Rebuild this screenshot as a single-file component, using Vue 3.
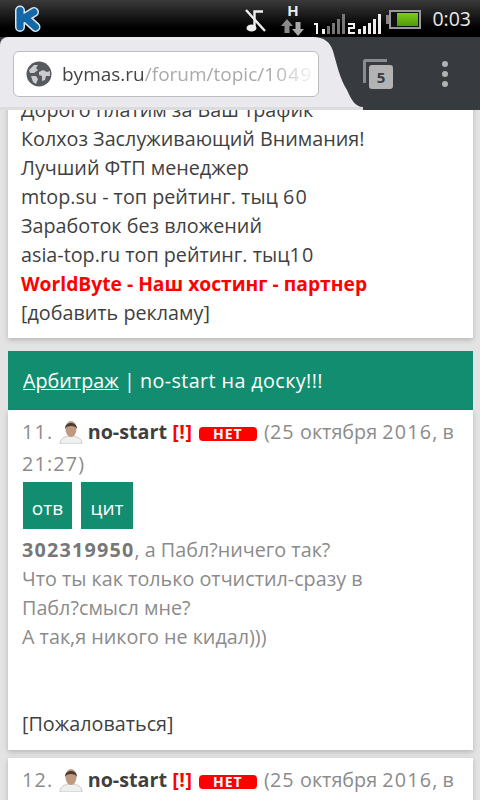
<template>
  <div class="phone">
    <header class="status">
      <svg class="klogo" width="30" height="30" viewBox="0 0 30 30">
        <g fill="none" stroke-linecap="round" stroke-linejoin="round">
          <path d="M6 7.500V24M6 17.500L20 9M11 14.500L21.500 24" stroke="#d9e6ee" stroke-width="10"/>
          <path d="M6 7.500V24M6 17.500L20 9M11 14.500L21.500 24" stroke="#1468a8" stroke-width="7"/>
        </g>
      </svg>
      <div class="spacer"></div>
      <svg class="mute" width="22" height="26" viewBox="0 0 22 26">
        <path d="M9.500 19V3.500H18" fill="none" stroke="#eee" stroke-width="2.400"/>
        <ellipse cx="6.500" cy="20" rx="5" ry="3.600" fill="#eee"/>
        <path d="M1 2L20 23" stroke="#eee" stroke-width="2.400"/>
      </svg>
      <div class="net">
        <span class="h">H</span>
        <svg width="23" height="17" viewBox="0 0 23 17"><path d="M6 0L12 7H8.500V14H3.500V7H0Z" fill="#8a8a8a"/><path d="M17 17L11 10H14.500V3H19.500V10H23Z" fill="#a8a8a8"/></svg>
      </div>
      <div class="signals">
        <svg width="68" height="24" viewBox="0 0 68 24">
          <g fill="#f2f2f2"><path d="M1 12H5V23H3V14H1ZM9 18H12V23H9Z"/></g>
          <g fill="#777"><rect x="14" y="15" width="3" height="8"/><rect x="19" y="12" width="3" height="11"/><rect x="24" y="8" width="3" height="15"/><rect x="29" y="3" width="3" height="20"/></g>
          <path d="M35 12H42V18H37V21H42V23H35V16H40V14H35Z" fill="#f2f2f2"/>
          <g fill="#eee"><rect x="45" y="18" width="3" height="5"/><rect x="50" y="15" width="3" height="8"/><rect x="55" y="12" width="3" height="11"/><rect x="60" y="8" width="3" height="15"/><rect x="65" y="3" width="3" height="20"/></g>
        </svg>
      </div>
      <div class="battery"><i class="cap"></i><i class="cell"><b></b></i></div>
      <span class="time">0:03</span>
    </header>

    <div class="toolbar">
      <div class="tab">
        <svg class="curve" width="50" height="73" viewBox="0 0 50 73"><path d="M0 0C11 0 17 5 20 14C24 28 27 42 34 53C38 62 42 70 50 70H0Z" fill="#e9e9ee"/><rect y="70" width="50" height="3" fill="#dcdcde"/></svg>
        <div class="omnibox">
          <svg class="globe" width="26" height="26" viewBox="0 0 26 26">
            <circle cx="13" cy="13" r="12.500" fill="#565a5e"/>
            <path d="M3 9L8 4L12 4L10 7L12 9L8 12L4 12ZM13 11L17 9L21 11L24 10L24 15L20 15L19 19L16 20L16 15L13 14ZM5 15L10 15L12 18L10 23L7 21Z" fill="#c9cbcd"/>
          </svg>
          <span class="url"><span class="dom">bymas.ru</span><span class="path">/forum/topic/<span class="d">10498</span></span></span>
        </div>
      </div>
      <div class="tools">
        <div class="tabs-btn">
          <span class="back-tab"></span>
          <span class="count">5</span>
        </div>
        <div class="menu"><i></i><i></i><i></i></div>
      </div>
    </div>

    <main class="page">
      <div class="flow">
        <section class="card ads">
          <div>Дорого платим за Ваш трафик</div>
          <div>Колхоз Заслуживающий Внимания!</div>
          <div>Лучший ФТП менеджер</div>
          <div>mtop.su - топ рейтинг. тыц <span class="d">60</span></div>
          <div>Заработок без вложений</div>
          <div>asia-top.ru топ рейтинг. тыц<span class="d">10</span></div>
          <div class="hot">WorldByte - Наш хостинг - партнер</div>
          <div>[добавить рекламу]</div>
        </section>

        <section class="title"><u>Арбитраж</u> | <span class="wide">no-start на доску!!!</span></section>

        <section class="card post">
          <div class="meta">
            <span class="d">11.</span>&nbsp;<svg class="ava" width="24" height="24" viewBox="0 0 24 24"><path d="M1 24C1 18 6 17 9 16H15C18 17 23 18 23 24Z" fill="#eef0f0" stroke="#bbb" stroke-width=".8"/><ellipse cx="12" cy="9" rx="5.500" ry="8" fill="#c09a80"/><path d="M6 9C5.500 1 18.500 1 18 9C17 5 7 5 6 9Z" fill="#4a3b35"/></svg>&nbsp;<b>no-start</b> <span class="warn">[!]</span> <span class="no">НЕТ</span> (<span class="d">25</span> октября <span class="d">2016</span>, в <span class="d">21:27</span>)
          </div>
          <div class="btns"><span class="reply">отв</span><span class="quote">цит</span></div>
          <div class="body">
            <b><span class="d">302319950</span></b>, а Пабл?ничего так?<br>Что ты как только отчистил-сразу в<br>Пабл?смысл мне?<br>А так,я никого не кидал)))
          </div>
          <div class="report">[Пожаловаться]</div>
        </section>

        <section class="card post next">
          <div class="meta">
            <span class="d">12.</span>&nbsp;<svg class="ava" width="24" height="24" viewBox="0 0 24 24"><path d="M1 24C1 18 6 17 9 16H15C18 17 23 18 23 24Z" fill="#eef0f0" stroke="#bbb" stroke-width=".8"/><ellipse cx="12" cy="9" rx="5.500" ry="8" fill="#c09a80"/><path d="M6 9C5.500 1 18.500 1 18 9C17 5 7 5 6 9Z" fill="#4a3b35"/></svg>&nbsp;<b>no-start</b> <span class="warn">[!]</span> <span class="no">НЕТ</span> (<span class="d">25</span> октября <span class="d">2016</span>, в <span class="d">21:27</span>)
          </div>
        </section>
      </div>
    </main>
  </div>
</template>

<script setup>
</script>

<style>
html, body { margin: 0; background: #e3e3e3; }
</style>

<style scoped>
.phone {
  width: 480px; height: 800px; overflow: hidden;
  display: flex; flex-direction: column;
  font-family: "Open Sans", "Noto Sans", sans-serif;
}
.d { letter-spacing: 1.2px; }
.status {
  height: 37px; flex: none; display: flex; align-items: center;
  background: linear-gradient(#3a3a3a, #000 75%);
  box-sizing: border-box; padding: 0 9px 0 14px;
}
.klogo { margin-top: -1px; }
.spacer { flex: 1; }
.mute { margin-top: 4px; margin-right: 14px; }
.net { width: 23px; display: flex; flex-direction: column; align-items: center; margin-right: 9px; margin-top: 4px; }
.h { color: #eee; font: bold 15px/12px "Liberation Sans", sans-serif; margin-bottom: 2px; }
.net svg { display: block; }
.signals { height: 24px; margin-top: 9px; margin-right: 5px; }
.signals svg { display: block; }
.battery { display: flex; align-items: center; margin-right: 11px; margin-top: 2px; }
.cap { width: 3px; height: 9px; background: #888; }
.cell { width: 26px; height: 13px; border: 2px solid #999; padding: 1px; background: #111; display: block; }
.cell b { display: block; height: 100%; background: linear-gradient(#7fcc1c, #4f9a08); margin-left: 5px; }
.time { color: #e8e8e8; font: 19.500px/1 "Open Sans", sans-serif; }

.toolbar {
  height: 73px; flex: none; display: flex; background: #373b40;
}
.tab {
  width: 313px; flex: none; position: relative; background: #e9e9ee;
  box-sizing: border-box; padding: 14px 0 0 13px;
  border-top-left-radius: 8px;
  border-bottom: 3px solid #dcdcde;
}
.curve { position: absolute; left: 313px; top: 0; display: block; }
.omnibox {
  position: relative;
  width: 306px; height: 46px; box-sizing: border-box;
  background: #fff; border: 1px solid #bdbdbd; border-radius: 6px;
  display: flex; align-items: center; padding-left: 12px; gap: 10px; overflow: hidden;
}
.globe { flex: none; }
.url { font-size: 19px; white-space: nowrap; -webkit-mask-image: linear-gradient(90deg,#000 80%,transparent 97%); mask-image: linear-gradient(90deg,#000 80%,transparent 97%); }
.dom { color: #444; }
.path { color: #aaa; }
.tools {
  flex: 1; display: flex; align-items: center; padding: 0 0 0 50px; gap: 49px; position: relative;
}
.tabs-btn { width: 30px; height: 30px; position: relative; }
.back-tab {
  position: absolute; left: 0; top: 0; width: 21px; height: 21px;
  border: 3px solid #8a8d90; border-right: 0; border-bottom: 0; border-radius: 3px 0 0 0;
}
.count {
  position: absolute; left: 6px; top: 6px; width: 24px; height: 24px;
  background: #b3b3b3; border-radius: 3px; color: #3a3d42;
  font: bold 15px/24px "Open Sans", sans-serif; text-align: center;
}
.menu { display: flex; flex-direction: column; gap: 4px; }
.menu i { width: 6px; height: 6px; border-radius: 50%; background: #b2b2b2; display: block; }

.page {
  flex: 1; min-height: 0; overflow: hidden; background: #e3e3e3;
}
.flow {
  margin-top: -41px; padding: 0 7px 0 8px;
  display: flex; flex-direction: column;
}
.card {
  background: #fff; box-shadow: 0 2px 5px rgba(0,0,0,.2);
  font-size: 19.750px; line-height: 29px; color: #3f3f3f;
}
.ads { padding: 26px 13px 11px; margin-bottom: 13px; }
.hot { color: #f00; font-weight: 700; font-size: 19.250px; }
.title {
  background: #138d70; color: #fff; height: 59px; line-height: 59px;
  padding: 0 15px; font-size: 19.750px;
}
.wide { letter-spacing: .4px; }
.post { padding: 6px 14px 12px; color: #8b8b8b; }
.meta { line-height: 32px; }
.meta b { color: #3f3f3f; }
.ava { vertical-align: -5px; }
.warn { color: #f00; font-weight: 700; letter-spacing: .6px; }
.no {
  display: inline-block; background: #f00; color: #fff; font: bold 14px/14px "Open Sans", sans-serif;
  width: 58px; text-align: center; border-radius: 4px; letter-spacing: 1px; margin: 0 2px 0 1px;
}
.btns { display: flex; gap: 9px; margin: 2px 0 6px 1px; }
.btns span {
  height: 47px; line-height: 52px; text-align: center; background: #138d70; color: #fff; font-size: 19px;
}
.reply { width: 49px; }
.quote { width: 52px; }
.body { line-height: 29px; }
.body b { color: #777; }
.report { margin-top: 58px; color: #3f3f3f; }
.next { margin-top: 8px; height: 60px; }
</style>
